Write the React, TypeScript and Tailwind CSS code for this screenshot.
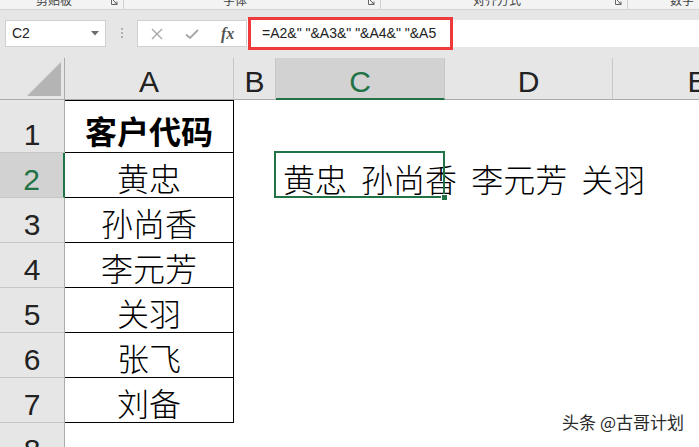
import React from "react";

const rows = [
  { n: 1, a: "客户代码", bold: true },
  { n: 2, a: "黄忠" },
  { n: 3, a: "孙尚香" },
  { n: 4, a: "李元芳" },
  { n: 5, a: "关羽" },
  { n: 6, a: "张飞" },
  { n: 7, a: "刘备" },
  { n: 8, a: "" },
];

const cols = ["A", "B", "C", "D", "E"];

const Launcher = () => (
  <svg width="7" height="7" viewBox="0 0 7 7" className="shrink-0">
    <path d="M0.5 0.5 V6.5 H6.5" fill="none" stroke="#666" strokeWidth="1" />
    <path d="M2 2 L6 6 M6 3.5 V6 H3.5" fill="none" stroke="#666" strokeWidth="1" />
  </svg>
);

const RibbonStrip = () => (
  <div className="flex h-[10px] overflow-hidden bg-[#f3f3f3] border-b border-[#d4d4d4] text-[12px] leading-[12px] text-[#444] font-['Noto_Sans_CJK_SC',sans-serif]">
    <div className="flex w-[124px] items-start border-r border-[#d0d0d0]">
      <span className="ml-[36px] -mt-[6px]">剪贴板</span>
      <div className="ml-auto mr-[5px] -mt-[2px]">
        <Launcher />
      </div>
    </div>
    <div className="flex w-[257px] items-start border-r border-[#d0d0d0]">
      <span className="ml-[99px] -mt-[6px]">字体</span>
      <div className="ml-auto mr-[5px] -mt-[2px]">
        <Launcher />
      </div>
    </div>
    <div className="flex w-[247px] items-start border-r border-[#d0d0d0]">
      <span className="ml-[92px] -mt-[6px]">对齐方式</span>
      <div className="ml-auto mr-[5px] -mt-[2px]">
        <Launcher />
      </div>
    </div>
    <div className="flex items-start">
      <span className="ml-[42px] -mt-[6px]">数字</span>
    </div>
  </div>
);

const FormulaBar = () => (
  <div className="flex h-[48px] items-start bg-[#e6e6e6] pt-[10px] font-['Liberation_Sans',Arial,sans-serif]">
    <div className="ml-[5px] flex h-[27px] w-[101px] items-center border border-[#d0d0d0] bg-white pl-[6px] pr-[6px] text-[14px] text-[#222]">
      <span className="flex-1">C2</span>
      <svg width="8" height="5" viewBox="0 0 8 5">
        <path d="M0 0 H8 L4 4.5 Z" fill="#6d6d6d" />
      </svg>
    </div>
    <div className="flex w-[31px] flex-col items-center gap-[2px] pt-[8px]">
      <span className="h-[2px] w-[2px] bg-[#b0b0b0]" />
      <span className="h-[2px] w-[2px] bg-[#b0b0b0]" />
      <span className="h-[2px] w-[2px] bg-[#b0b0b0]" />
    </div>
    <div className="flex h-[27px] w-[110px] items-center border border-[#d0d0d0] bg-white">
      <svg width="12" height="12" viewBox="0 0 12 12" className="ml-[13px]">
        <path d="M1 1 L11 11 M11 1 L1 11" stroke="#a6a6a6" strokeWidth="1.4" />
      </svg>
      <svg width="14" height="10" viewBox="0 0 14 10" className="ml-[22px]">
        <path d="M1 5.5 L5 9 L13 1" fill="none" stroke="#a6a6a6" strokeWidth="1.8" />
      </svg>
      <span className="ml-[22px] font-['Liberation_Serif',serif] text-[16px] italic font-bold leading-none text-[#555]">
        fx
      </span>
    </div>
    <div className="relative flex h-[27px] flex-1 items-center bg-white pl-[15px] text-[14px] text-[#222]">
      <span className="whitespace-pre">=A2&amp;" "&amp;A3&amp;" "&amp;A4&amp;" "&amp;A5</span>
      <div className="absolute left-[1px] top-[-3px] h-[33px] w-[205px] border-[3px] border-[#ee3a3a]" />
    </div>
  </div>
);

export default function App() {
  return (
    <div className="relative h-[447px] w-[699px] overflow-hidden bg-white">
      <RibbonStrip />
      <FormulaBar />
      <div className="grid w-[783px] grid-cols-[65px_169px_42px_169px_168px_170px] grid-rows-[42px_53px_repeat(7,45px)] font-['Liberation_Sans',Arial,sans-serif] text-[30px] leading-none text-[#222]">
        {/* corner */}
        <div className="flex items-end justify-end border-r border-b border-[#ababab] bg-[#e6e6e6] pb-[3px] pr-[3px]">
          <svg width="34" height="34" viewBox="0 0 34 34">
            <path d="M34 0 V34 H0 Z" fill="#b4b4b4" />
          </svg>
        </div>
        {cols.map((c) =>
          c === "C" ? (
            <div
              key={c}
              className="flex items-end justify-center border-r border-b-2 border-r-[#c6c6c6] border-b-[#217346] bg-[#d2d2d2] pb-[1px] text-[#217346]"
            >
              {c}
            </div>
          ) : (
            <div
              key={c}
              className="flex items-end justify-center border-r border-b border-r-[#c6c6c6] border-b-[#ababab] bg-[#e6e6e6] pb-[2px]"
            >
              {c}
            </div>
          )
        )}

        {rows.map((r) => (
          <React.Fragment key={r.n}>
            {r.n === 2 ? (
              <div className="flex items-end justify-center border-r-2 border-b border-r-[#217346] border-b-[#c6c6c6] bg-[#d2d2d2] pb-[2px] text-[#217346]">
                {r.n}
              </div>
            ) : (
              <div className="flex items-end justify-center border-r border-b border-r-[#ababab] border-b-[#c6c6c6] bg-[#e6e6e6] pb-[2px]">
                {r.n}
              </div>
            )}

            {r.n <= 7 ? (
              <div
                className={
                  r.n === 1
                    ? "flex items-center justify-center border-t border-r border-b border-black pt-[6px] font-['Noto_Sans_CJK_SC',sans-serif] text-[32px] font-bold text-black"
                    : "flex items-center justify-center border-r border-b border-black pt-[4px] font-['Noto_Sans_CJK_SC',sans-serif] text-[32px] font-light text-black"
                }
              >
                {r.a}
              </div>
            ) : (
              <div />
            )}

            <div />

            {r.n === 2 ? (
              <div className="relative z-10 flex items-center pl-[7px] pt-[4px]">
                <span className="whitespace-nowrap font-['Noto_Sans_CJK_SC',sans-serif] text-[32px] font-light text-black [word-spacing:7px]">
                  黄忠 孙尚香 李元芳 关羽
                </span>
                <div className="absolute -left-[2px] -top-[2px] right-0 bottom-0 border-2 border-[#217346]" />
                <div className="absolute -right-[3px] -bottom-[3px] h-[7px] w-[7px] border border-white bg-[#217346]" />
              </div>
            ) : (
              <div />
            )}

            <div />
            <div />
          </React.Fragment>
        ))}
      </div>

      <div className="absolute right-[15px] top-[413px] font-['Noto_Sans_CJK_SC',sans-serif] text-[17px] leading-none text-[#2a2a2a] [text-shadow:0_0_2px_#fff,0_0_2px_#fff]">
        头条 @古哥计划
      </div>
    </div>
  );
}
